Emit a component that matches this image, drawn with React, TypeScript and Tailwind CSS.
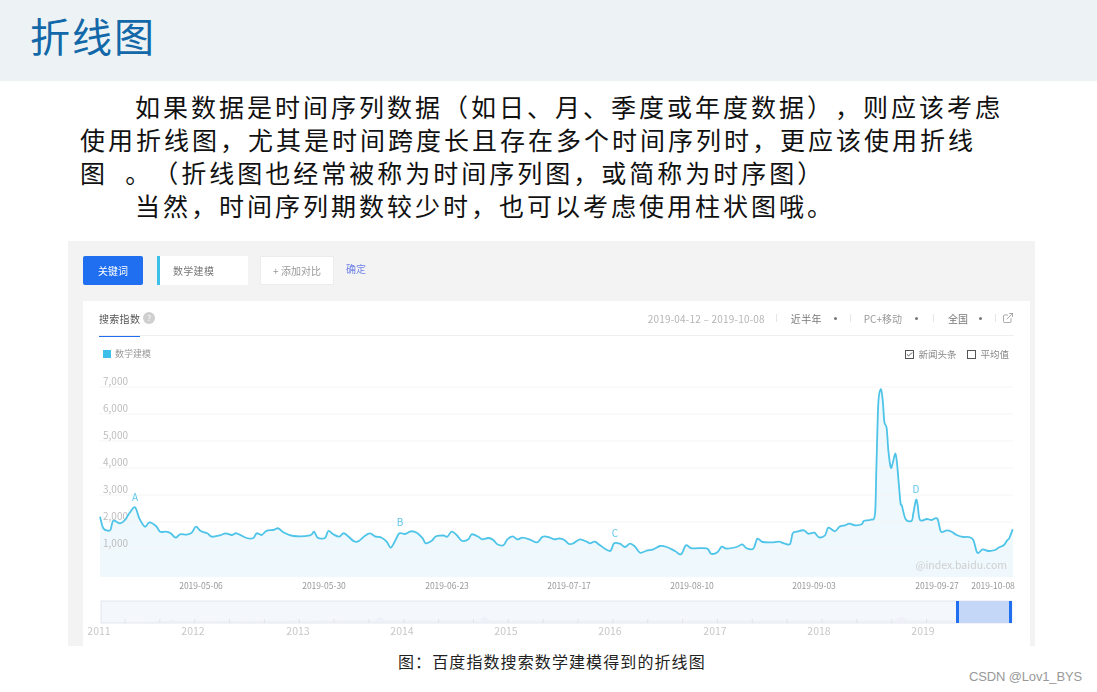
import React from 'react';
import { ExternalLink, Check } from 'lucide-react';

// points read off the reference, in 3x crop coordinates
const leftPts = [
  [60,140],[70,175],[85,182],[92,178],[100,152],[120,160],[135,150],[148,130],[165,112],[178,145],[195,170],[208,157],[228,168],[240,185],[258,185],[272,190],[287,203],[300,193],[320,194],[335,188],[348,170],[362,183],[382,190],[395,200],[420,196],[437,190],[455,195],[470,190],[500,204],[520,204],[530,190],[545,195],[560,182],[580,180],[595,175],[610,187],[640,198],[690,196],[702,185],[713,203],[735,204],[745,183],[760,193],[778,200],[793,190],[822,214],[838,212],[855,197],[870,190],[885,199],[905,203],[920,215],[932,233],[945,213],[958,190],[975,192],[992,184],[1010,188],[1028,205],[1037,220],[1055,212],[1068,199],[1090,196],[1102,200],[1115,185],[1130,195],[1145,212],[1165,208],[1175,193],[1195,200],[1207,208],[1225,204],[1240,210],[1252,223],[1270,226],[1282,208],[1298,199],[1312,208],[1328,203],[1350,209],[1372,217],[1388,200],[1408,202],[1422,208],[1438,205],[1452,209],[1467,222],[1480,220],
];
const rightPts = [
  [0,508],[20,515],[30,520],[45,515],[60,526],[90,543],[102,520],[120,521],[135,531],[150,521],[165,530],[180,548],[200,542],[220,538],[240,528],[260,531],[285,543],[303,553],[318,526],[335,535],[380,535],[393,551],[412,547],[425,530],[440,536],[470,531],[487,523],[500,535],[520,536],[532,506],[548,516],[580,517],[597,515],[615,521],[630,522],[638,490],[650,485],[672,481],[685,491],[703,488],[717,502],[735,496],[745,473],[765,484],[778,470],[795,466],[808,461],[825,466],[845,463],[852,452],[872,449],[885,432],[889,300],[895,100],[902,58],[908,90],[913,155],[920,175],[925,240],[932,292],[938,280],[946,250],[951,280],[958,360],[962,402],[966,408],[977,448],[995,452],[1000,430],[1008,390],[1013,405],[1020,450],[1040,447],[1055,450],[1072,446],[1083,485],[1100,481],[1115,485],[1130,495],[1150,501],[1165,501],[1180,510],[1192,548],[1208,538],[1225,543],[1245,540],[1255,533],[1272,525],[1282,510],[1287,506],[1298,478],
];

const points = [
  ...leftPts.map(([x, y]) => [80 + x / 3, 470 + y / 3]),
  ...rightPts.map(([x, y]) => [580 + x / 3, 370 + y / 3]),
];

const fmt = (n: number) => n.toFixed(1);

// catmull-rom through the points, so the line stays soft like the original
const linePath = points.reduce((d, p, i) => {
  if (i === 0) return `M${fmt(p[0])} ${fmt(p[1])}`;
  const p0 = points[Math.max(i - 2, 0)];
  const p1 = points[i - 1];
  const p3 = points[Math.min(i + 1, points.length - 1)];
  const c1x = p1[0] + (p[0] - p0[0]) / 6;
  const c1y = p1[1] + (p[1] - p0[1]) / 6;
  const c2x = p[0] - (p3[0] - p1[0]) / 6;
  const c2y = p[1] - (p3[1] - p1[1]) / 6;
  return `${d} C${fmt(c1x)} ${fmt(c1y)} ${fmt(c2x)} ${fmt(c2y)} ${fmt(p[0])} ${fmt(p[1])}`;
}, '');

const areaPath = `${linePath} L1013 577 L100 577 Z`;

const yAxis = [
  { label: '7,000', y: 387 },
  { label: '6,000', y: 414 },
  { label: '5,000', y: 441 },
  { label: '4,000', y: 468 },
  { label: '3,000', y: 495 },
  { label: '2,000', y: 522 },
  { label: '1,000', y: 549 },
];

const xAxis = [
  { label: '2019-05-06', x: 201 },
  { label: '2019-05-30', x: 324 },
  { label: '2019-06-23', x: 447 },
  { label: '2019-07-17', x: 569 },
  { label: '2019-08-10', x: 692 },
  { label: '2019-09-03', x: 814 },
  { label: '2019-09-27', x: 937 },
  { label: '2019-10-08', x: 993 },
];

const years = [
  { label: '2011', x: 99 },
  { label: '2012', x: 193 },
  { label: '2013', x: 298 },
  { label: '2014', x: 402 },
  { label: '2015', x: 506 },
  { label: '2016', x: 610 },
  { label: '2017', x: 715 },
  { label: '2018', x: 819 },
  { label: '2019', x: 923 },
];

const marks = [
  { label: 'A', x: 135, y: 501 },
  { label: 'B', x: 400, y: 526 },
  { label: 'C', x: 615, y: 537 },
  { label: 'D', x: 916, y: 493 },
];

const brushTicks = Array.from({ length: 26 }, (_, i) => 125 + i * 34.85);

const Chart = () => (
  <svg viewBox="83 370 947 276" className="w-[947px] h-[276px] block">
    <path d={areaPath} fill="#eff8fc" />
    {yAxis.map((t) => (
      <g key={t.label}>
        <line x1="99" x2="1013" y1={t.y} y2={t.y} stroke="#f4f5f6" />
        <text x="103" y={t.y - 2} fontSize="10" fill="#bdbdbd">
          {t.label}
        </text>
      </g>
    ))}
    <path d={linePath} fill="none" stroke="#4ec4e8" strokeWidth="1.8" strokeLinejoin="round" />
    {marks.map((m) => (
      <text key={m.label} x={m.x} y={m.y} fontSize="10" fill="#62c6e8" textAnchor="middle">
        {m.label}
      </text>
    ))}
    <text x="1007" y="569" fontSize="10.5" fill="#cfcfcf" textAnchor="end">
      @index.baidu.com
    </text>
    {xAxis.map((t) => (
      <text key={t.label} x={t.x} y="589" fontSize="8.5" fill="#9a9a9a" textAnchor="middle">
        {t.label}
      </text>
    ))}
    <rect x="101" y="601" width="911" height="22" fill="#f4f7fc" stroke="#dde2e8" strokeWidth="0.8" />
    <path
      d="M101.5 622.5 L170 621 L172 619 L176 621 L375 620.5 L380 617 L386 620.5 L480 620.5 L484 616 L490 620.5 L895 620.5 L902 616 L908 620.5 L1012 620.5 L1012 622.5 Z"
      fill="#eef1f8"
    />
    {brushTicks.map((x) => (
      <line key={x} x1={x} x2={x} y1="619" y2="623" stroke="#dcdfe6" strokeWidth="0.8" />
    ))}
    <rect x="958" y="601" width="53" height="22" fill="#c5d7f7" />
    <rect x="956" y="601" width="3" height="22" fill="#1f6ff0" />
    <rect x="1009" y="601" width="3" height="22" fill="#1f6ff0" />
    {years.map((t) => (
      <text key={t.label} x={t.x} y="635" fontSize="10.5" fill="#c8c8c8" textAnchor="middle">
        {t.label}
      </text>
    ))}
  </svg>
);

const Sep = () => <span className="block w-px h-[8px] bg-[#e6e6e6]" />;
const Dot = () => <span className="block w-[3px] h-[3px] rounded-full bg-[#777]" />;

const App = () => {
  return (
    <div
      lang="zh-CN"
      className="relative w-[1097px] h-[692px] overflow-hidden bg-white font-['Noto_Sans_CJK_SC',sans-serif]"
    >
      <header className="h-[81px] bg-[#edf3f4] pl-[30px] pb-[12px] flex items-center">
        <h1 className="text-[40px] leading-none tracking-[2px] text-[#1268a8] font-normal">折线图</h1>
      </header>

      <div className="h-[141px] pt-[9px] pl-[80px] text-[25px] leading-[33px] tracking-[3px] text-[#111] whitespace-pre [text-spacing-trim:space-all]">
        <p className="pl-[55px]">如果数据是时间序列数据（如日、月、季度或年度数据），则应该考虑</p>
        <p>使用折线图，尤其是时间跨度长且存在多个时间序列时，更应该使用折线</p>
        <p>图  。（折线图也经常被称为时间序列图，或简称为时序图）</p>
        <p className="pl-[55px]">当然，时间序列期数较少时，也可以考虑使用柱状图哦。</p>
      </div>

      <section className="mt-[19px] ml-[68px] w-[967px] h-[405px] bg-[#f3f3f3] blur-[0.4px]">
        <div className="h-[60px] pt-[15px] pl-[15px] flex items-start">
          <button className="w-[60px] h-[29px] rounded-[2px] bg-[#1f6ff0] text-white text-[10px]">关键词</button>
          <div className="ml-[14px] w-[91px] h-[29px] bg-white border-l-[3px] border-[#3cc0ea] pl-[13px] flex items-center text-[10px] tracking-[0.3px] text-[#777]">
            数学建模
          </div>
          <div className="ml-[12px] w-[74px] h-[29px] bg-white border border-[#ececec] flex items-center justify-center text-[10px] text-[#999]">
            + 添加对比
          </div>
          <span className="ml-[12px] mt-[5px] text-[10px] leading-[15px] text-[#6f80e8]">确定</span>
        </div>

        <div className="ml-[15px] w-[947px] h-[345px] bg-white">
          <div className="mx-[16px] h-[35px] border-b border-[#eeeeee] flex items-center">
            <div className="relative h-[35px] flex items-center">
              <span className="text-[10px] tracking-[0.3px] text-[#555]">搜索指数</span>
              <span className="absolute left-0 bottom-[-1px] w-[41px] h-px bg-[#1f6ff0]" />
            </div>
            <span className="ml-[3px] w-[12px] h-[12px] rounded-full bg-[#cfcfcf] text-white text-[8px] leading-[12px] text-center">?</span>
            <div className="ml-auto flex items-center text-[10px] text-[#777]">
              <span className="text-[#b5b5b5] tracking-[0.2px]">2019-04-12 – 2019-10-08</span>
              <span className="ml-[11px] flex"><Sep /></span>
              <span className="ml-[14px] tracking-[0.3px]">近半年</span>
              <span className="ml-[12px] flex"><Dot /></span>
              <span className="ml-[13px] flex"><Sep /></span>
              <span className="ml-[13px] text-[#999]">PC+移动</span>
              <span className="ml-[13px] flex"><Dot /></span>
              <span className="ml-[15px] flex"><Sep /></span>
              <span className="ml-[14px]">全国</span>
              <span className="ml-[11px] flex"><Dot /></span>
              <span className="ml-[13px] flex"><Sep /></span>
              <ExternalLink className="ml-[6px] w-[12px] h-[12px] text-[#888]" strokeWidth={1.4} />
            </div>
          </div>

          <div className="h-[34px] pt-[2px] mx-[20px] flex items-center">
            <span className="w-[8px] h-[8px] bg-[#3cc0ea]" />
            <span className="ml-[4px] text-[9px] text-[#999]">数学建模</span>
            <div className="ml-auto mr-[-16px] pr-[17px] flex items-center text-[9.5px] text-[#888]">
              <span className="w-[9px] h-[9px] border border-[#555] flex items-center justify-center">
                <Check className="w-[7px] h-[7px] text-[#444]" strokeWidth={3} />
              </span>
              <span className="ml-[4px]">新闻头条</span>
              <span className="ml-[11px] w-[9px] h-[9px] border border-[#555]" />
              <span className="ml-[4px]">平均值</span>
            </div>
          </div>

          <Chart />
        </div>
      </section>

      <p className="mt-[4px] pl-[398px] text-[16px] leading-[22px] tracking-[1.1px] text-[#222] [text-spacing-trim:space-all]">图：百度指数搜索数学建模得到的折线图</p>

      <span className="absolute left-[969px] top-[669px] font-['Liberation_Sans',sans-serif] text-[13px] leading-[16px] tracking-[-0.15px] text-[#999]">
        CSDN @Lov1_BYS
      </span>
    </div>
  );
};

export default App;
